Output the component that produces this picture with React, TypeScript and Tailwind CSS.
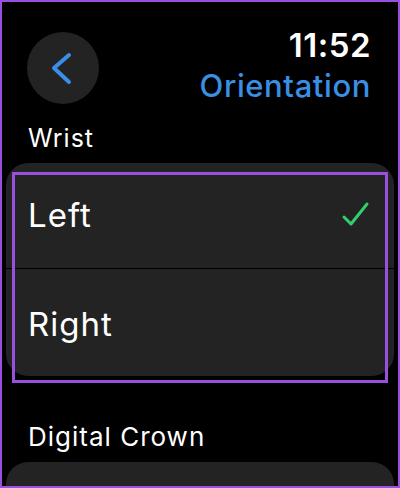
import React from 'react';

const font = { fontFamily: 'Inter, "Noto Sans", sans-serif' };

function BackButton() {
  return (
    <div className="w-[72px] h-[72px] rounded-full bg-[#232323] flex items-center justify-center">
      <svg width="72" height="72" viewBox="0 0 72 72" fill="none">
        <path d="M42 23 L27 36 L42 50" stroke="#3a8fe4" strokeWidth="4" strokeLinecap="round" strokeLinejoin="round" />
      </svg>
    </div>
  );
}

function Check() {
  return (
    <svg width="32" height="32" viewBox="0 0 32 32" fill="none">
      <path d="M4 17 L11 24 L27 4" stroke="#2fcf6e" strokeWidth="3" strokeLinecap="round" strokeLinejoin="round" />
    </svg>
  );
}

export default function App() {
  return (
    <div style={font} className="w-[400px] h-[488px] bg-black border-2 border-[#9b4fe0] overflow-hidden text-white">
      <div className="flex items-start justify-between pl-[25px] pr-[27px] pt-[30px]">
        <BackButton />
        <div className="flex flex-col items-end mt-[-3px]">
          <div className="text-[33px] leading-[33px] font-semibold tracking-[0.5px]">11:52</div>
          <div className="text-[31px] leading-[31px] font-medium text-[#3a8fe4] mt-[8px] tracking-[0.6px]">Orientation</div>
        </div>
      </div>

      <div className="pl-[26px] mt-[19px] text-[25px] leading-[30px] tracking-[1px]">Wrist</div>

      <div className="relative mx-[4px] mt-[10px]">
        <div className="rounded-[22px] bg-[#232323] overflow-hidden">
          <div className="h-[106px] flex items-center justify-between pl-[22px] pr-[22px] border-b border-black">
            <span className="text-[33px] tracking-[1px]">Left</span>
            <Check />
          </div>
          <div className="h-[107px] flex items-center pl-[22px] pt-[5px]">
            <span className="text-[33px] tracking-[1px]">Right</span>
          </div>
        </div>
        <div className="absolute left-[6px] right-[6px] top-[9px] bottom-[-7px] border-[3px] border-[#9b4fe0] pointer-events-none" />
      </div>

      <div className="pl-[26px] mt-[46px] text-[26px] leading-[30px] tracking-[1px]">Digital Crown</div>

      <div className="mx-[4px] mt-[10px] h-[60px] rounded-[22px] bg-[#232323]" />
    </div>
  );
}
